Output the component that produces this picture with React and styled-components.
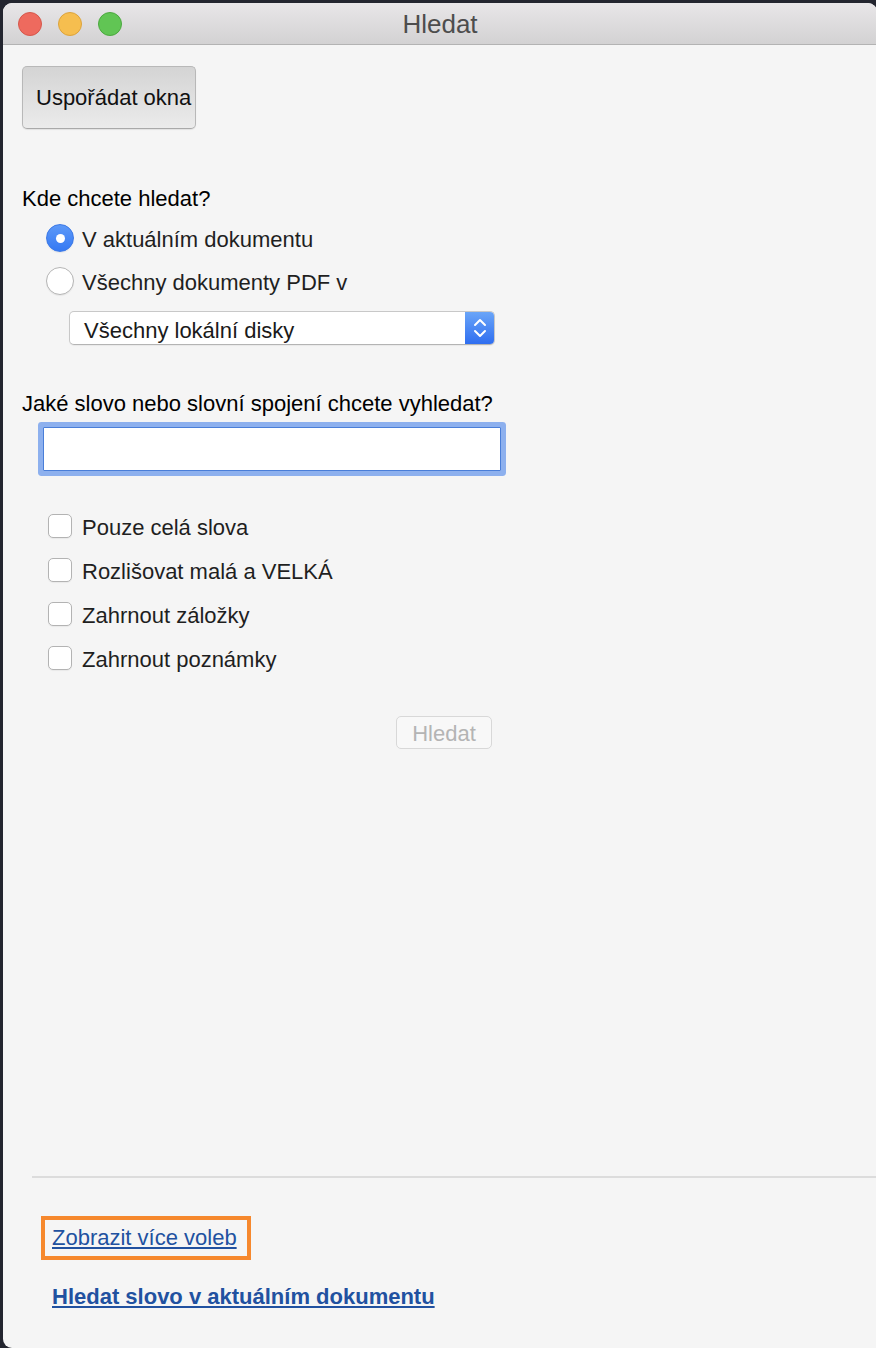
import styled, { createGlobalStyle } from 'styled-components';

const GlobalStyle = createGlobalStyle`
  html, body {
    margin: 0;
    padding: 0;
    background: #23252f;
    overflow: hidden;
  }
  body {
    font-family: "Liberation Sans", Arial, Helvetica, sans-serif;
  }
`;

const Window = styled.div`
  margin: 3px 0 0 3px;
  width: 874px;
  height: 1345px;
  background: #f5f5f5;
  border-radius: 9px 9px 0 9px;
  overflow: hidden;
  display: flex;
  flex-direction: column;
`;

const TitleBar = styled.div`
  height: 41px;
  flex-shrink: 0;
  display: grid;
  grid-template-columns: 1fr auto 1fr;
  align-items: center;
  background: linear-gradient(#e8e6e8, #d3d2d3);
  border-bottom: 1px solid #b3b3b3;
`;

const Lights = styled.div`
  display: flex;
  gap: 16px;
  padding-left: 15px;
`;

const Light = styled.span`
  width: 24px;
  height: 24px;
  border-radius: 50%;
  box-sizing: border-box;
  background: ${({ $color }) => $color};
  border: 1px solid ${({ $edge }) => $edge};
`;

const Title = styled.div`
  font-size: 26px;
  color: #4d4d4d;
  line-height: 30px;
`;

const Content = styled.div`
  flex: 1;
  display: flex;
  flex-direction: column;
  align-items: flex-start;
  padding-left: 19px;
`;

const ArrangeButton = styled.button`
  margin-top: 21px;
  width: 174px;
  height: 63px;
  box-sizing: border-box;
  padding: 0 0 0 13px;
  text-align: left;
  white-space: nowrap;
  font-family: inherit;
  font-size: 22px;
  line-height: 26px;
  color: #111;
  background: linear-gradient(#d4d4d4, #ebebeb);
  border: 1px solid #b8b8b8;
  border-bottom-color: #a9a9a9;
  border-radius: 5px;
  box-shadow: 0 1px 1px rgba(0, 0, 0, 0.08);
`;

const SectionLabel = styled.div`
  margin-top: ${({ $top }) => $top}px;
  font-size: 22px;
  line-height: 26px;
  color: #000;
`;

const OptionList = styled.div`
  margin-top: ${({ $top }) => $top}px;
  padding-left: ${({ $indent }) => $indent}px;
  display: flex;
  flex-direction: column;
  gap: ${({ $gap }) => $gap}px;
`;

const OptionRow = styled.label`
  display: flex;
  align-items: center;
  gap: ${({ $gap }) => $gap}px;
  height: ${({ $height }) => $height}px;
  font-size: 22px;
  line-height: 26px;
  color: #1f1f1f;
`;

const OptionText = styled.span`
  padding-top: 3px;
`;

const Radio = styled.span`
  width: 28px;
  height: 28px;
  border-radius: 50%;
  box-sizing: border-box;
  flex-shrink: 0;
  display: flex;
  align-items: center;
  justify-content: center;
  background: ${({ $on }) => ($on ? 'linear-gradient(#5d99f8, #3579f3)' : '#fff')};
  border: 1px solid ${({ $on }) => ($on ? '#3b78e6' : '#b5b5b5')};
  box-shadow: 0 1px 1px rgba(0, 0, 0, 0.06);

  &::after {
    content: '';
    display: ${({ $on }) => ($on ? 'block' : 'none')};
    width: 9px;
    height: 9px;
    border-radius: 50%;
    background: #fff;
  }
`;

const Checkbox = styled.span`
  width: 24px;
  height: 24px;
  box-sizing: border-box;
  flex-shrink: 0;
  background: #fff;
  border: 1px solid #b3b3b3;
  border-radius: 5px;
  box-shadow: 0 1px 1px rgba(0, 0, 0, 0.05);
`;

const Select = styled.div`
  margin: 16px 0 0 47px;
  width: 426px;
  height: 34px;
  box-sizing: border-box;
  display: flex;
  align-items: stretch;
  background: #fff;
  border: 1px solid #c8c8c8;
  border-bottom-color: #b4b4b4;
  border-radius: 5px;
  overflow: hidden;
  box-shadow: 0 1px 1px rgba(0, 0, 0, 0.05);
`;

const SelectValue = styled.span`
  flex: 1;
  padding: 6px 0 0 14px;
  font-size: 22px;
  line-height: 26px;
  color: #1a1a1a;
`;

const SelectArrows = styled.span`
  width: 29px;
  display: flex;
  align-items: center;
  justify-content: center;
  background: linear-gradient(#6aa5f8, #2f6ef0);
`;

const SearchInput = styled.input`
  margin: 10px 0 0 21px;
  width: 458px;
  height: 44px;
  box-sizing: border-box;
  border: 1px solid #4a7ed8;
  border-radius: 1px;
  background: #fff;
  box-shadow: 0 0 0 5px #8db0ee;
  outline: none;
  font-family: inherit;
  font-size: 22px;
`;

const SearchButton = styled.button`
  margin: 46px 0 0 374px;
  width: 96px;
  height: 33px;
  box-sizing: border-box;
  padding: 2px 0 0;
  font-family: inherit;
  font-size: 22px;
  line-height: 26px;
  color: #b4b4b4;
  background: #f8f8f8;
  border: 1px solid #d8d8d8;
  border-radius: 5px;
`;

const Footer = styled.div`
  flex-shrink: 0;
  display: flex;
  flex-direction: column;
  align-items: flex-start;
  padding-bottom: 38px;
`;

const Separator = styled.div`
  align-self: stretch;
  margin-left: 29px;
  height: 2px;
  background: #dcdcdc;
`;

const FocusBox = styled.div`
  margin: 38px 0 0 38px;
  border: 4px solid #f6882d;
  padding: 5px 10px 5px 7px;
`;

const Link = styled.a`
  display: block;
  font-size: 22px;
  line-height: 26px;
  font-weight: ${({ $bold }) => ($bold ? 700 : 400)};
  color: #2151a0;
  text-decoration: underline;
  text-decoration-thickness: 2px;
  text-underline-offset: 2px;
  cursor: pointer;
`;

const BoldLinkWrap = styled.div`
  margin: 24px 0 0 49px;
`;

const scopes = [
  { label: 'V aktuálním dokumentu', on: true },
  { label: 'Všechny dokumenty PDF v', on: false },
];

const checks = ['Pouze celá slova', 'Rozlišovat malá a VELKÁ', 'Zahrnout záložky', 'Zahrnout poznámky'];

export default function App() {
  return (
    <>
      <GlobalStyle />
      <Window>
        <TitleBar>
          <Lights>
            <Light $color="#ee6a5e" $edge="#d5574b" />
            <Light $color="#f6be4f" $edge="#dca33c" />
            <Light $color="#61c554" $edge="#4ca83f" />
          </Lights>
          <Title>Hledat</Title>
          <span />
        </TitleBar>

        <Content>
          <ArrangeButton>Uspořádat okna</ArrangeButton>

          <SectionLabel $top={57}>Kde chcete hledat?</SectionLabel>
          <OptionList $top={12} $indent={24} $gap={15}>
            {scopes.map((s) => (
              <OptionRow key={s.label} $height={28} $gap={8}>
                <Radio $on={s.on} />
                <OptionText>{s.label}</OptionText>
              </OptionRow>
            ))}
          </OptionList>

          <Select>
            <SelectValue>Všechny lokální disky</SelectValue>
            <SelectArrows>
              <svg width="14" height="22" viewBox="0 0 14 22" fill="none" stroke="#fff" strokeWidth="2" strokeLinecap="round" strokeLinejoin="round">
                <polyline points="2,8 7,3 12,8" />
                <polyline points="2,14 7,19 12,14" />
              </svg>
            </SelectArrows>
          </Select>

          <SectionLabel $top={46}>Jaké slovo nebo slovní spojení chcete vyhledat?</SectionLabel>
          <SearchInput type="text" />

          <OptionList $top={43} $indent={26} $gap={20}>
            {checks.map((c) => (
              <OptionRow key={c} $height={24} $gap={10}>
                <Checkbox />
                <OptionText>{c}</OptionText>
              </OptionRow>
            ))}
          </OptionList>

          <SearchButton disabled>Hledat</SearchButton>
        </Content>

        <Footer>
          <Separator />
          <FocusBox>
            <Link>Zobrazit více voleb</Link>
          </FocusBox>
          <BoldLinkWrap>
            <Link $bold>Hledat slovo v aktuálním dokumentu</Link>
          </BoldLinkWrap>
        </Footer>
      </Window>
    </>
  );
}
